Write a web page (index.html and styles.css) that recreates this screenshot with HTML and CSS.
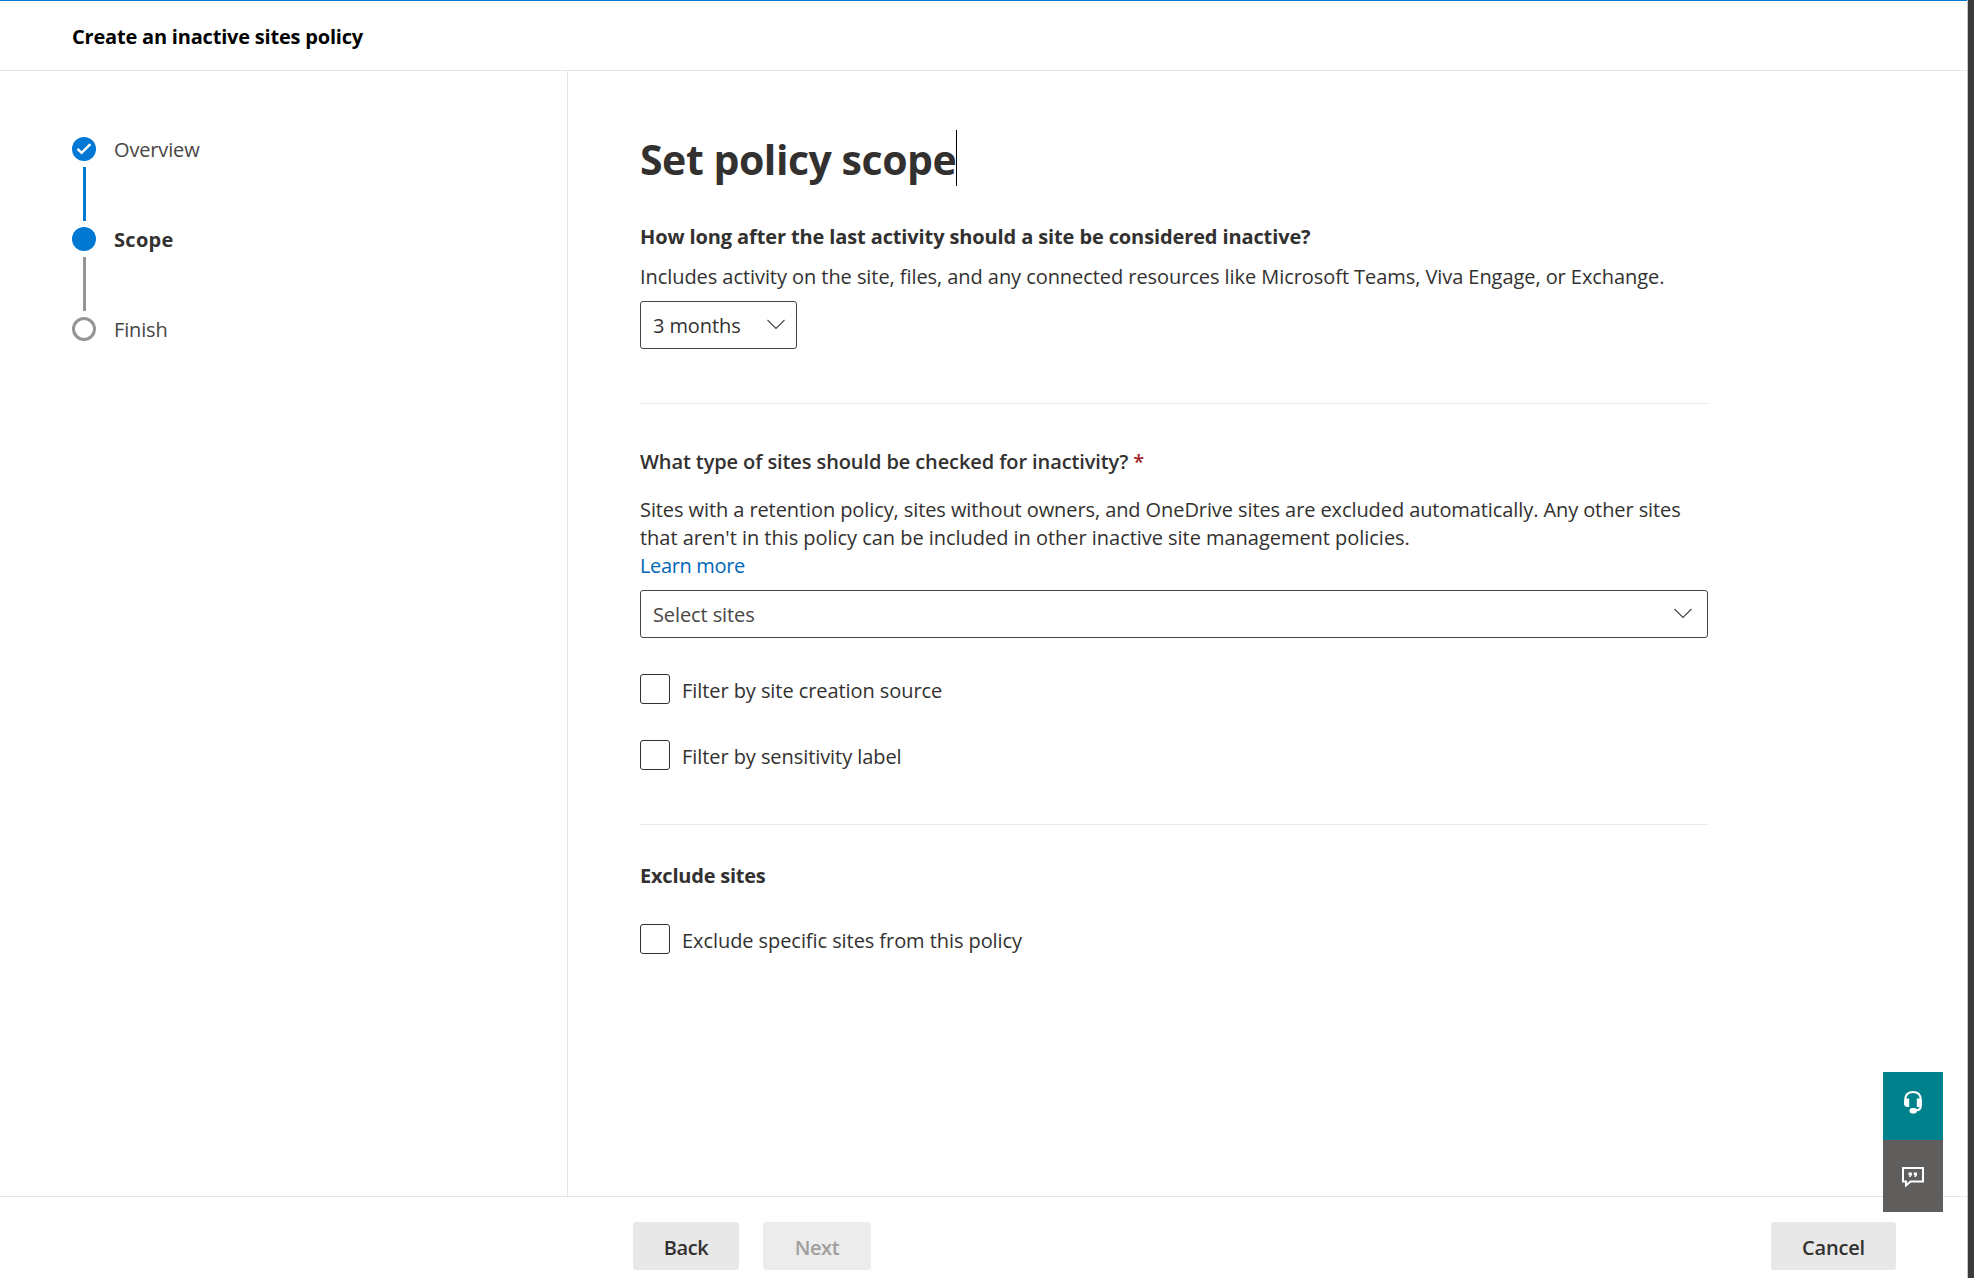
FILE: index.html
```
<!DOCTYPE html>
<html lang="en">
<head>
<meta charset="utf-8">
<title>Create an inactive sites policy</title>
<link rel="stylesheet" href="styles.css">
</head>
<body>
<div class="window">
  <div class="panel">
    <header class="header"><h2 class="header-title">Create an inactive sites policy</h2></header>
    <div class="body">
      <nav class="steps">
        <div class="step">
          <span class="dot dot-done"><svg width="24" height="24" viewBox="0 0 24 24"><path d="M5.500 11.800 9.600 15.900 18.400 7.200" fill="none" stroke="#fff" stroke-width="2.400"/></svg></span>
          <span class="step-label">Overview</span>
        </div>
        <div class="line line-done"></div>
        <div class="step"><span class="dot dot-current"></span><span class="step-label step-label-current">Scope</span></div>
        <div class="line"></div>
        <div class="step"><span class="dot"></span><span class="step-label">Finish</span></div>
      </nav>
      <main class="content">
        <h1 class="title"><span class="title-text">Set policy scope</span><span class="caret"></span></h1>
        <section class="section">
          <h3 class="question">How long after the last activity should a site be considered inactive?</h3>
          <p class="hint">Includes activity on the site, files, and any connected resources like Microsoft Teams, Viva Engage, or Exchange.</p>
          <div class="select select-short"><span class="value">3 months</span><svg class="chevron" width="18" height="11" viewBox="0 0 18 11"><path d="M.5 1 9 9.500 17.500 1" fill="none" stroke="#484644" stroke-width="1.100"/></svg></div>
        </section>
        <section class="section section-types">
          <h3 class="question question-types">What type of sites should be checked for inactivity? <span class="required">*</span></h3>
          <p class="hint hint-types">Sites with a retention policy, sites without owners, and OneDrive sites are excluded automatically. Any other sites<br><span class="hint-second">that aren't in this policy can be included in other inactive site management policies.</span><br><a class="link">Learn more</a></p>
          <div class="select select-wide"><span class="value placeholder">Select sites</span><svg class="chevron" width="18" height="11" viewBox="0 0 18 11"><path d="M.5 1 9 9.500 17.500 1" fill="none" stroke="#484644" stroke-width="1.100"/></svg></div>
          <div class="checks">
            <label class="check"><span class="box"></span><span class="check-text">Filter by site creation source</span></label>
            <label class="check"><span class="box"></span><span class="check-text">Filter by sensitivity label</span></label>
          </div>
        </section>
        <section class="section section-exclude">
          <h3 class="question question-exclude">Exclude sites</h3>
          <label class="check"><span class="box"></span><span class="check-text">Exclude specific sites from this policy</span></label>
        </section>
      </main>
    </div>
    <footer class="footer">
      <button class="button button-back">Back</button>
      <button class="button button-next" disabled>Next</button>
      <button class="button button-cancel">Cancel</button>
    </footer>
  </div>
  <div class="edge"></div>
  <aside class="support">
    <div class="support-help"><svg width="20" height="25" viewBox="0 0 20 25"><path d="M2.200 10C2.200 4.500 5 2 10 2s7.800 2.500 7.800 8v5.500c0 3-1.800 4.800-5 4.800" fill="none" stroke="#fff" stroke-width="2.200"/><path d="M1 11.500c0-2 1.500-3 3-3h2.200v8.500H4.500c-2.300 0-3.500-1.500-3.500-3.500zM19 11.500c0-2-1.500-3-3-3h-2.200v8.500h1.700c2.300 0 3.500-1.500 3.500-3.500z" fill="#fff"/><rect x="6.500" y="18" width="7.500" height="5.500" rx="2.700" fill="#fff"/></svg></div>
    <div class="support-feedback"><svg width="24" height="21" viewBox="0 0 24 21"><path d="M2 2h20v13.500H9.500L5 19.500v-4H2z" fill="none" stroke="#fff" stroke-width="2"/><path d="M7.500 6.500h3.300v2.700L9.500 11H8l.8-1.800H7.500zM12.700 6.500H16v2.700L14.700 11h-1.500l.8-1.800h-1.300z" fill="#fff"/></svg></div>
  </aside>
</div>
</body>
</html>
```
FILE: styles.css
```
* { box-sizing: border-box; }

body {
  margin: 0;
  background: #fff;
  color: #323130;
  font: 20px/28px "Open Sans", "Segoe UI", sans-serif;
  letter-spacing: -0.05px;
}

h1, h2, h3, p { margin: 0; }
h2, h3 { font-size: 20px; line-height: 28px; font-weight: 700; }

.window {
  position: relative;
  display: flex;
  width: 1974px;
  height: 1278px;
  overflow: hidden;
}

.panel {
  display: flex;
  flex-direction: column;
  width: 1967px;
  border-top: 1px solid #0078d4;
}

.edge {
  width: 7px;
  border-left: 1px solid #c8c8c8;
  background: #3b3a39;
}

.header {
  flex: none;
  height: 70px;
  padding: 22px 0 0 72px;
  border-bottom: 1px solid #e5e5e5;
}

.header-title { color: #000; letter-spacing: -0.2px; }

.body { display: flex; flex: 1; }

.steps {
  width: 568px;
  padding: 66px 0 0 72px;
  border-right: 1px solid #e5e5e5;
}

.step { display: flex; align-items: center; gap: 18px; height: 24px; }
.step-label { padding-top: 2px; color: #484644; letter-spacing: -0.15px; }
.step-label-current { color: #323130; font-weight: 700; letter-spacing: 0.3px; }

.dot {
  width: 24px;
  height: 24px;
  border: 3px solid #979593;
  border-radius: 50%;
}
.dot-done, .dot-current { border: 0; background: #0078d4; }
.dot-done svg { display: block; }

.line { width: 3px; height: 54px; margin: 6px 0 6px 11px; background: #979593; }
.line-done { background: #0078d4; }

.content { width: 1140px; padding: 59px 0 0 72px; }

.title {
  display: flex;
  height: 56px;
  font-size: 41px;
  line-height: 58px;
  font-weight: 700;
  letter-spacing: -0.46px;
}
.caret { width: 1px; height: 56px; background: #000; }

.section { padding: 37px 0 54px; white-space: nowrap; }
.section-types { padding-top: 44px; border: solid #edebe9; border-width: 1px 0; }

.question { margin-bottom: 12px; letter-spacing: -0.12px; }
.question-types { margin-bottom: 20px; font-weight: 600; letter-spacing: -0.1px; }
.question-exclude { margin-bottom: 34px; letter-spacing: -0.22px; }
.required { color: #a4262c; }

.hint { margin-bottom: 10px; letter-spacing: -0.065px; }
.hint-types { letter-spacing: -0.09px; }
.hint-second { letter-spacing: -0.035px; }
.link { color: #0067b8; letter-spacing: -0.35px; }

.select {
  display: flex;
  align-items: center;
  justify-content: space-between;
  height: 48px;
  padding: 0 11px 0 12px;
  border: 1px solid #484644;
  border-radius: 3px;
}
.select-short { width: 157px; }
.select-wide { padding-right: 15px; }
.value { padding-top: 2px; letter-spacing: -0.1px; }
.placeholder { color: #484644; }
.chevron { margin-top: -2px; }

.checks { display: flex; flex-direction: column; gap: 36px; padding-top: 36px; }
.check { display: flex; gap: 12px; height: 30px; }
.box { width: 30px; height: 30px; border: 1px solid #323130; border-radius: 3px; }
.check-text { padding-top: 3px; letter-spacing: -0.07px; }

.footer {
  display: flex;
  flex: none;
  height: 82px;
  padding: 25px 71px 0 633px;
  border-top: 1px solid #e5e5e5;
}

.button {
  height: 48px;
  padding: 3px 0 0;
  border: 0;
  border-radius: 3px;
  background: #e8e8e8;
  color: #323130;
  font: 600 20px/28px "Open Sans", "Segoe UI", sans-serif;
  letter-spacing: -0.4px;
}
.button-back { width: 106px; margin-right: 24px; }
.button-next { width: 108px; background: #ececec; color: #a19f9d; }
.button-cancel { width: 125px; margin-left: auto; letter-spacing: -0.2px; }

/* Floating support buttons over the footer edge */
.support { position: absolute; top: 1072px; right: 31px; width: 60px; }
.support-help, .support-feedback { display: flex; align-items: center; justify-content: center; }
.support-help { height: 68px; padding-bottom: 7px; background: #00828c; }
.support-feedback { height: 72px; background: #605e5c; }
```
